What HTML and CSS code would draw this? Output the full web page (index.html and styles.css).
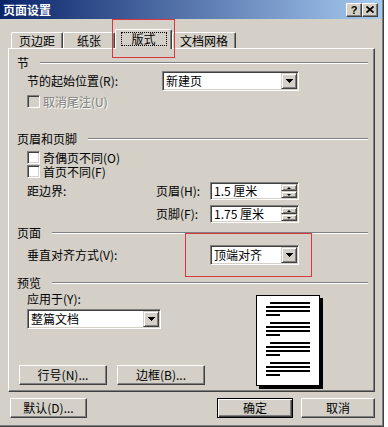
FILE: index.html
```html
<!DOCTYPE html>
<html lang="zh-CN">

<head>
    <meta charset="UTF-8">
    <meta name="viewport" content="width=device-width, initial-scale=1.0">
    <title>页面设置</title>
    <link rel="stylesheet" href="styles.css">
</head>

<body>
<div class="dialog">

    <!-- Title Bar -->
    <div class="title-bar">
        <span class="title-text">页面设置</span>
        <div class="title-btns">
            <span class="title-btn help">?</span>
            <span class="title-btn">
                <svg width="8" height="7" viewBox="0 0 8 7"><path d="M0.5 0.5 L7.5 6.5 M7.5 0.5 L0.5 6.5" stroke="#000" stroke-width="1.7"/></svg>
            </span>
        </div>
    </div>

    <!-- Tabs -->
    <div class="tabs">
        <div class="tab">页边距</div>
        <div class="tab">纸张</div>
        <div class="tab tab-active"><span class="focus">版式</span></div>
        <div class="tab tab-wide">文档网格</div>
    </div>

    <!-- Tab Panel -->
    <div class="panel">
        <div class="group-head head-section"><span>节</span><i class="rule"></i></div>
        <div class="row row-start">
            <span class="label label-start">节的起始位置(R):</span>
            <div class="combo combo-start">
                <span class="combo-value">新建页</span>
                <span class="combo-btn"><svg width="7" height="4" viewBox="0 0 7 4"><path d="M0 0h7v1h-1v1h-1v1h-1v1h-1v-1h-1v-1h-1v-1h-1z" fill="#000"/></svg></span>
            </div>
        </div>
        <div class="check check-disabled"><span class="box"></span><span class="dim">取消尾注(U)</span></div>

        <div class="group-head head-hf"><span>页眉和页脚</span><i class="rule"></i></div>
        <div class="check check-odd"><span class="box"></span><span>奇偶页不同(O)</span></div>
        <div class="check check-first"><span class="box"></span><span>首页不同(F)</span></div>
        <div class="row row-header">
            <span class="label label-edge">距边界:</span>
            <span class="label label-spin">页眉(H):</span>
            <div class="spin">
                <span class="spin-value">1.5 厘米</span>
                <span class="spin-btns"><span class="spin-btn"><i class="arrow-up"></i></span><span class="spin-btn"><i class="arrow-down"></i></span></span>
            </div>
        </div>
        <div class="row row-footer">
            <span class="label label-edge"></span>
            <span class="label label-spin">页脚(F):</span>
            <div class="spin">
                <span class="spin-value">1.75 厘米</span>
                <span class="spin-btns"><span class="spin-btn"><i class="arrow-up"></i></span><span class="spin-btn"><i class="arrow-down"></i></span></span>
            </div>
        </div>

        <div class="group-head head-page"><span>页面</span><i class="rule"></i></div>
        <div class="row row-align">
            <span class="label label-align">垂直对齐方式(V):</span>
            <div class="combo combo-align">
                <span class="combo-value">顶端对齐</span>
                <span class="combo-btn"><svg width="7" height="4" viewBox="0 0 7 4"><path d="M0 0h7v1h-1v1h-1v1h-1v1h-1v-1h-1v-1h-1v-1h-1z" fill="#000"/></svg></span>
            </div>
        </div>

        <div class="group-head head-preview"><span>预览</span><i class="rule"></i></div>
        <div class="preview">
            <div class="preview-left">
                <div class="apply-label">应用于(Y):</div>
                <div class="combo combo-apply">
                    <span class="combo-value">整篇文档</span>
                    <span class="combo-btn"><svg width="7" height="4" viewBox="0 0 7 4"><path d="M0 0h7v1h-1v1h-1v1h-1v1h-1v-1h-1v-1h-1v-1h-1z" fill="#000"/></svg></span>
                </div>
                <div class="preview-btns">
                    <span class="btn btn-panel">行号(N)...</span>
                    <span class="btn btn-panel">边框(B)...</span>
                </div>
            </div>
            <div class="page">
                <div class="para"><i class="ln ln-indent"></i><i class="ln"></i><i class="ln"></i><i class="ln ln-short"></i></div>
                <div class="para"><i class="ln ln-indent"></i><i class="ln"></i><i class="ln"></i><i class="ln ln-short"></i></div>
                <div class="para"><i class="ln ln-indent"></i><i class="ln"></i><i class="ln"></i><i class="ln ln-short"></i></div>
                <div class="para"><i class="ln ln-indent"></i><i class="ln"></i><i class="ln"></i><i class="ln ln-short"></i></div>
            </div>
        </div>
    </div>

    <!-- Dialog Buttons -->
    <div class="footer">
        <span class="btn btn-reset">默认(D)...</span>
        <span class="btn btn-default btn-ok">确定</span>
        <span class="btn btn-cancel">取消</span>
    </div>

    <!-- Highlight marks -->
    <div class="mark mark-tab"></div>
    <div class="mark mark-align"></div>
</div>
</body>
</html>
```

FILE: styles.css
```css
/* General */
body {
    margin: 0;
    background-color: #FFFFFF;
    font-family: "Noto Sans CJK SC", "Liberation Sans", sans-serif;
    font-size: 12px;
    line-height: 12px;
    color: #000000;
}

.dialog {
    position: relative;
    width: 384px;
    height: 427px;
    box-sizing: border-box;
    background-color: #D4D0C8;
    border-right: 1px solid #404040;
    border-bottom: 1px solid #404040;
    box-shadow: inset -1px -1px 0 #808080;
    display: flex;
    flex-direction: column;
}

/* Title Bar */
.title-bar {
    height: 19px;
    margin-right: 1px;
    padding: 0 4px 0 3px;
    display: flex;
    align-items: center;
    background: linear-gradient(to right, #0A246A, #A6CAF0);
}

.title-text {
    flex: 1;
    color: #FFFFFF;
    font-weight: bold;
}

.title-btns {
    display: flex;
}

.title-btn {
    width: 16px;
    height: 14px;
    box-sizing: border-box;
    background-color: #D4D0C8;
    border: 1px solid;
    border-color: #FFFFFF #404040 #404040 #FFFFFF;
    box-shadow: inset -1px -1px 0 #808080;
    display: flex;
    align-items: center;
    justify-content: center;
}

.help {
    font-family: "Liberation Sans", sans-serif;
    font-weight: bold;
    font-size: 11px;
}

/* Tabs */
.tabs {
    display: flex;
    align-items: flex-end;
    height: 20px;
    margin: 10px 0 -1px 11px;
}

.tab {
    width: 52px;
    height: 16px;
    margin-bottom: 1px;
    box-sizing: border-box;
    border-top: 1px solid #FFFFFF;
    border-left: 1px solid #FFFFFF;
    border-right: 1px solid #404040;
    border-radius: 2px 2px 0 0;
    box-shadow: inset -1px 0 0 #808080;
    display: flex;
    align-items: center;
    justify-content: center;
}

.tab-wide {
    width: 64px;
}

.tab-active {
    position: relative;
    z-index: 1;
    width: 57px;
    height: 20px;
    margin-bottom: 0;
    padding-top: 2px;
    align-items: flex-start;
    background-color: #D4D0C8;
}

.focus {
    width: 46px;
    height: 14px;
    box-sizing: border-box;
    border: 1px dotted #000000;
    display: flex;
    align-items: center;
    justify-content: center;
}

/* Panel */
.panel {
    width: 367px;
    height: 344px;
    margin-left: 8px;
    box-sizing: border-box;
    border: 1px solid;
    border-color: #FFFFFF #404040 #404040 #FFFFFF;
    box-shadow: inset -1px -1px 0 #808080;
    display: flex;
    flex-direction: column;
}

.group-head {
    height: 12px;
    padding-left: 8px;
    display: flex;
    align-items: center;
}

.rule {
    flex: 1;
    height: 0;
    margin: 0 6px 0 11px;
    border-top: 1px solid #808080;
    border-bottom: 1px solid #FFFFFF;
}

.head-section { margin-top: 8px; }
.head-hf { margin-top: 25px; }
.head-page { margin-top: 4px; }
.head-preview { margin-top: 12px; }

.row {
    display: flex;
    align-items: center;
    padding-left: 18px;
}

.row-start { margin-top: 2px; height: 20px; }
.row-header { margin-top: 4px; height: 18px; }
.row-footer { margin-top: 5px; height: 18px; }
.row-align { margin-top: 6px; height: 20px; }

.label-start { width: 135px; }
.label-edge { width: 129px; }
.label-spin { width: 54px; }
.label-align { width: 183px; }

/* Checkboxes */
.check {
    height: 13px;
    padding-left: 18px;
    display: flex;
    align-items: center;
    gap: 3px;
}

.check-disabled { margin-top: 4px; }
.check-odd { margin-top: 6px; }
.check-first { margin-top: 1px; }

.box {
    width: 13px;
    height: 13px;
    box-sizing: border-box;
    background-color: #FFFFFF;
    border: 1px solid;
    border-color: #808080 #FFFFFF #FFFFFF #808080;
    box-shadow: inset 1px 1px 0 #404040, inset -1px -1px 0 #D4D0C8;
}

.check-disabled .box {
    background-color: #D4D0C8;
}

.dim {
    color: #808080;
    text-shadow: 1px 1px 0 #FFFFFF;
}

/* Combo boxes */
.combo {
    height: 20px;
    padding: 1px;
    box-sizing: border-box;
    background-color: #FFFFFF;
    border: 1px solid;
    border-color: #808080 #FFFFFF #FFFFFF #808080;
    box-shadow: inset 1px 1px 0 #404040, inset -1px -1px 0 #D4D0C8;
    display: flex;
}

.combo-start { width: 137px; }
.combo-align { width: 89px; }
.combo-apply { width: 134px; margin: 4px 0 0 8px; }

.combo-value {
    flex: 1;
    padding-left: 2px;
    display: flex;
    align-items: center;
}

.combo-btn {
    width: 16px;
    box-sizing: border-box;
    background-color: #D4D0C8;
    border: 1px solid;
    border-color: #D4D0C8 #404040 #404040 #D4D0C8;
    box-shadow: inset 1px 1px 0 #FFFFFF, inset -1px -1px 0 #808080;
    display: flex;
    align-items: center;
    justify-content: center;
}

/* Spin boxes */
.spin {
    width: 89px;
    height: 18px;
    padding: 1px;
    box-sizing: border-box;
    background-color: #FFFFFF;
    border: 1px solid;
    border-color: #808080 #FFFFFF #FFFFFF #808080;
    box-shadow: inset 1px 1px 0 #404040, inset -1px -1px 0 #D4D0C8;
    display: flex;
}

.spin-value {
    flex: 1;
    padding-left: 2px;
    display: flex;
    align-items: center;
}

.spin-btns {
    width: 16px;
    display: flex;
    flex-direction: column;
}

.spin-btn {
    flex: 1;
    box-sizing: border-box;
    background-color: #D4D0C8;
    border: 1px solid;
    border-color: #D4D0C8 #404040 #404040 #D4D0C8;
    box-shadow: inset 1px 1px 0 #FFFFFF, inset -1px -1px 0 #808080;
    display: flex;
    align-items: center;
    justify-content: center;
}

.arrow-up,
.arrow-down {
    width: 0;
    height: 0;
    border-left: 2px solid transparent;
    border-right: 2px solid transparent;
}

.arrow-up { border-bottom: 2px solid #000000; }
.arrow-down { border-top: 2px solid #000000; }

/* Preview */
.preview {
    display: flex;
    align-items: flex-start;
}

.preview-left {
    width: 247px;
    padding-left: 10px;
    box-sizing: border-box;
}

.apply-label {
    height: 12px;
    margin: 4px 0 0 8px;
}

.preview-btns {
    display: flex;
    gap: 10px;
    margin-top: 36px;
}

.page {
    width: 64px;
    height: 91px;
    margin-top: 6px;
    padding: 6px 0 0 9px;
    box-sizing: border-box;
    background-color: #FFFFFF;
    border: 1px solid #000000;
    box-shadow: 3px 3px 0 #000000;
}

.para {
    display: flex;
    flex-direction: column;
    gap: 2px;
    margin-bottom: 6px;
}

.ln {
    display: block;
    width: 44px;
    height: 2px;
    background-color: #000000;
}

.ln-indent {
    width: 40px;
    margin-left: 4px;
}

.ln-short {
    width: 14px;
}

/* Push buttons */
.btn {
    height: 20px;
    box-sizing: border-box;
    background-color: #D4D0C8;
    border: 1px solid;
    border-color: #FFFFFF #404040 #404040 #FFFFFF;
    box-shadow: inset -1px -1px 0 #808080;
    display: flex;
    align-items: center;
    justify-content: center;
}

.btn-panel { width: 88px; }

.btn-default {
    border-color: #000000;
    box-shadow: inset 1px 1px 0 #FFFFFF, inset -1px -1px 0 #404040, inset -2px -2px 0 #808080;
}

/* Footer */
.footer {
    display: flex;
    margin: 6px 8px 0 10px;
}

.btn-reset { width: 77px; }
.btn-ok { width: 76px; margin-left: auto; }
.btn-cancel { width: 74px; margin-left: 8px; }

/* Red highlight boxes */
.mark {
    position: absolute;
    border: 1px solid #D9363E;
    z-index: 2;
}

.mark-tab {
    left: 112px;
    top: 19px;
    width: 61px;
    height: 37px;
}

.mark-align {
    left: 185px;
    top: 233px;
    width: 125px;
    height: 42px;
}
```
